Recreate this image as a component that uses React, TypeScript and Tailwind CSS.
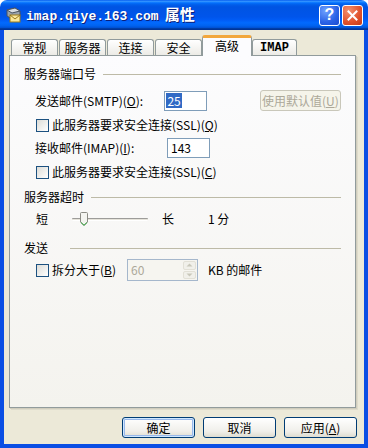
import React from "react";

const cjk = "font-['Noto_Sans_CJK_SC',sans-serif]";

function MailIcon() {
  return (
    <svg width="17" height="17" viewBox="0 0 17 17" className="shrink-0">
      <path d="M2 3 L10 1 L15 4 L15 9 L7 12 L2 9 Z" fill="#9aa3ad" stroke="#4a535e" strokeWidth="1" />
      <path d="M2 3 L10 1 L15 4 L7 6 Z" fill="#d9dee3" stroke="#4a535e" strokeWidth="1" />
      <rect x="5" y="8" width="10" height="7" fill="#fbe89a" stroke="#9a7a1a" strokeWidth="1" />
      <path d="M5 8 L10 12 L15 8" fill="none" stroke="#9a7a1a" strokeWidth="1" />
    </svg>
  );
}

function Check() {
  return <span className="block w-[13px] h-[13px] shrink-0 border border-[#1c5180] bg-[linear-gradient(135deg,#dcdcd7,#ffffff)]" />;
}

function Tab({ label, w, ml, active, mono }: { label: string; w: string; ml: string; active?: boolean; mono?: boolean }) {
  const base = `${w} ${ml} flex items-center justify-center text-[12px] text-black rounded-t-[3px] border border-[#919b9c] border-b-0 `;
  const font = mono ? "font-['Liberation_Mono',monospace] font-bold text-[11px]" : cjk;
  if (active) {
    return (
      <div className={`${base} ${font} relative z-10 h-[21px] -mb-px border-t-[3px] border-t-[#f2a73c] bg-[#fcfcfe] pb-[2px]`}>
        {label}
      </div>
    );
  }
  return <div className={`${base} ${font} h-[16px] bg-[linear-gradient(to_bottom,#ffffff,#ecebe6)]`}>{label}</div>;
}

function Header({ label, lineMl }: { label: string; lineMl: string }) {
  return (
    <div className="flex items-center h-4">
      <span className="text-[12px] leading-none">{label}</span>
      <span className={`flex-1 h-px bg-[#bdbaa7] ${lineMl}`} />
    </div>
  );
}

function Thumb() {
  return (
    <svg width="8" height="14" viewBox="0 0 8 14" className="absolute left-[8px] top-[1px]">
      <path d="M1.5 0.5 H6.5 Q7.5 0.5 7.5 1.5 V10 L4 13.5 L0.5 10 V1.5 Q0.5 0.5 1.5 0.5 Z" fill="#f4f4f0" stroke="#8b8b84" />
      <path d="M1 10.5 L4 13.3 L7 10.5" fill="none" stroke="#2fa33a" strokeWidth="1" />
    </svg>
  );
}

function Btn({ children, def }: { children: React.ReactNode; def?: boolean }) {
  return (
    <div
      className={`w-[73px] h-[21px] flex items-center justify-center text-[12px] rounded-[3px] border border-[#003c74] bg-[linear-gradient(to_bottom,#ffffff,#f0efea_70%,#dedcd0)] ${
        def ? "shadow-[inset_0_0_0_1px_#cee7ff,inset_0_0_0_2px_#98b8ea]" : ""
      }`}
    >
      {children}
    </div>
  );
}

export default function App() {
  return (
    <div className={`w-[368px] h-[448px] flex flex-col rounded-t-[7px] overflow-hidden ${cjk} text-black`}>
      {/* title bar */}
      <div className="h-[30px] shrink-0 flex items-center pl-[5px] pr-[5px] bg-[linear-gradient(to_bottom,#0058ee_0%,#3593ff_4%,#288eff_6%,#127dff_8%,#036ffc_10%,#0262ee_14%,#0057e5_20%,#0054e3_24%,#0055eb_56%,#005bf5_66%,#026afe_76%,#0062ef_86%,#0052d6_92%,#0040ab_94%,#003092_100%)]">
        <MailIcon />
        <div className="ml-[4px] flex items-baseline text-white font-bold [text-shadow:1px_1px_0_#0a1e7a]">
          <span className="font-['Liberation_Mono',monospace] text-[13px]">imap.qiye.163.com</span>
          <span className={`${cjk} ml-[6px] text-[15px]`}>属性</span>
        </div>
        <div className="ml-auto flex gap-[2px]">
          <div className="w-[21px] h-[21px] rounded-[3px] border border-white flex items-center justify-center bg-[radial-gradient(circle_at_30%_25%,#6fa2ff,#2a62e6_60%,#1b4ccf)] text-white font-bold text-[16px] font-['Liberation_Sans',sans-serif] leading-none">
            ?
          </div>
          <div className="w-[21px] h-[21px] rounded-[3px] border border-white flex items-center justify-center bg-[radial-gradient(circle_at_30%_25%,#f3916f,#e0512b_60%,#c23a18)]">
            <svg width="11" height="11" viewBox="0 0 11 11">
              <path d="M1.5 1.5 L9.5 9.5 M9.5 1.5 L1.5 9.5" stroke="#ffffff" strokeWidth="2" strokeLinecap="square" />
            </svg>
          </div>
        </div>
      </div>

      {/* body */}
      <div className="flex-1 flex flex-col border-x-4 border-b-4 border-[#0a4ee4] bg-[#ece9d8] pt-[6px] pl-[5px]">
        {/* tabs */}
        <div className="flex items-end h-[19px] ml-[2px]">
          <Tab label="常规" w="w-[47px]" ml="ml-0" />
          <Tab label="服务器" w="w-[47px]" ml="ml-[1px]" />
          <Tab label="连接" w="w-[47px]" ml="ml-[1px]" />
          <Tab label="安全" w="w-[47px]" ml="ml-[1px]" />
          <Tab label="高级" w="w-[50px]" ml="ml-0" active />
          <Tab label="IMAP" w="w-[45px]" ml="ml-0" mono />
        </div>

        {/* panel */}
        <div className="w-[347px] h-[353px] border border-[#919b9c] bg-[linear-gradient(to_bottom,#fcfcfe,#f4f3ee)] shadow-[1px_1px_0_#d0cdbd,2px_2px_0_#dedbcb] px-[14px] flex flex-col text-[12px]">
          <div className="mt-[10px]">
            <Header label="服务器端口号" lineMl="ml-[7px]" />
          </div>

          <div className="mt-[8px] h-[21px] flex items-center ml-[11px]">
            <span className="w-[132px] leading-none">
              发送邮件(SMTP)(<u>O</u>):
            </span>
            <div className="w-[43px] h-[20px] border border-[#7f9db9] bg-white flex items-center pl-[1px]">
              <span className="bg-[#316ac5] text-white px-[1px] leading-[15px]">25</span>
            </div>
            <div className="ml-[53px] w-[83px] h-[21px] rounded-[3px] border border-[#c9c7ba] bg-[#f5f4ea] text-[#aca899] flex items-center justify-center">
              使用默认值(<u>U</u>)
            </div>
          </div>

          <div className="mt-[6px] h-4 flex items-center ml-[12px]">
            <Check />
            <span className="ml-[3px] leading-none">
              此服务器要求安全连接(SSL)(<u>Q</u>)
            </span>
          </div>

          <div className="mt-[5px] h-[20px] flex items-center ml-[11px]">
            <span className="w-[132px] leading-none">
              接收邮件(IMAP)(<u>I</u>):
            </span>
            <div className="w-[43px] h-[20px] border border-[#7f9db9] bg-white flex items-center pl-[3px]">143</div>
          </div>

          <div className="mt-[6px] h-4 flex items-center ml-[12px]">
            <Check />
            <span className="ml-[3px] leading-none">
              此服务器要求安全连接(SSL)(<u>C</u>)
            </span>
          </div>

          <div className="mt-[9px]">
            <Header label="服务器超时" lineMl="ml-[7px]" />
          </div>

          <div className="mt-[6px] h-4 flex items-center ml-[12px]">
            <span className="w-[36px] leading-none">短</span>
            <div className="relative w-[76px] h-4 flex items-center">
              <div className="w-full h-[3px] rounded-[1px] border-t border-t-[#9d9c99] border-b border-b-white bg-[#e5e3da]" />
              <Thumb />
            </div>
            <span className="ml-[14px] leading-none">长</span>
            <span className="ml-[34px] leading-none">1 分</span>
          </div>

          <div className="mt-[13px]">
            <Header label="发送" lineMl="ml-[22px]" />
          </div>

          <div className="mt-[3px] h-[22px] flex items-center ml-[12px]">
            <Check />
            <span className="ml-[3px] w-[75px] leading-none">
              拆分大于(<u>B</u>)
            </span>
            <div className="w-[71px] h-[22px] border border-[#a5b7cc] bg-[#f6f5f0] flex items-stretch">
              <span className="flex-1 flex items-center pl-[3px] text-[#aca899]">60</span>
              <div className="w-[15px] flex flex-col gap-px p-px">
                <div className="flex-1 rounded-[2px] bg-[#f1f0ea] border border-[#e2e0d6] flex items-center justify-center">
                  <svg width="7" height="4" viewBox="0 0 7 4">
                    <path d="M0.5 3.5 L3.5 0.5 L6.5 3.5 Z" fill="#c9c7ba" />
                  </svg>
                </div>
                <div className="flex-1 rounded-[2px] bg-[#f1f0ea] border border-[#e2e0d6] flex items-center justify-center">
                  <svg width="7" height="4" viewBox="0 0 7 4">
                    <path d="M0.5 0.5 L3.5 3.5 L6.5 0.5 Z" fill="#c9c7ba" />
                  </svg>
                </div>
              </div>
            </div>
            <span className="ml-[10px] leading-none">KB 的邮件</span>
          </div>
        </div>

        {/* buttons */}
        <div className="mt-[9px] flex justify-end gap-[8px] pr-[7px]">
          <Btn def>确定</Btn>
          <Btn>取消</Btn>
          <Btn>
            应用(<u>A</u>)
          </Btn>
        </div>
      </div>
    </div>
  );
}
